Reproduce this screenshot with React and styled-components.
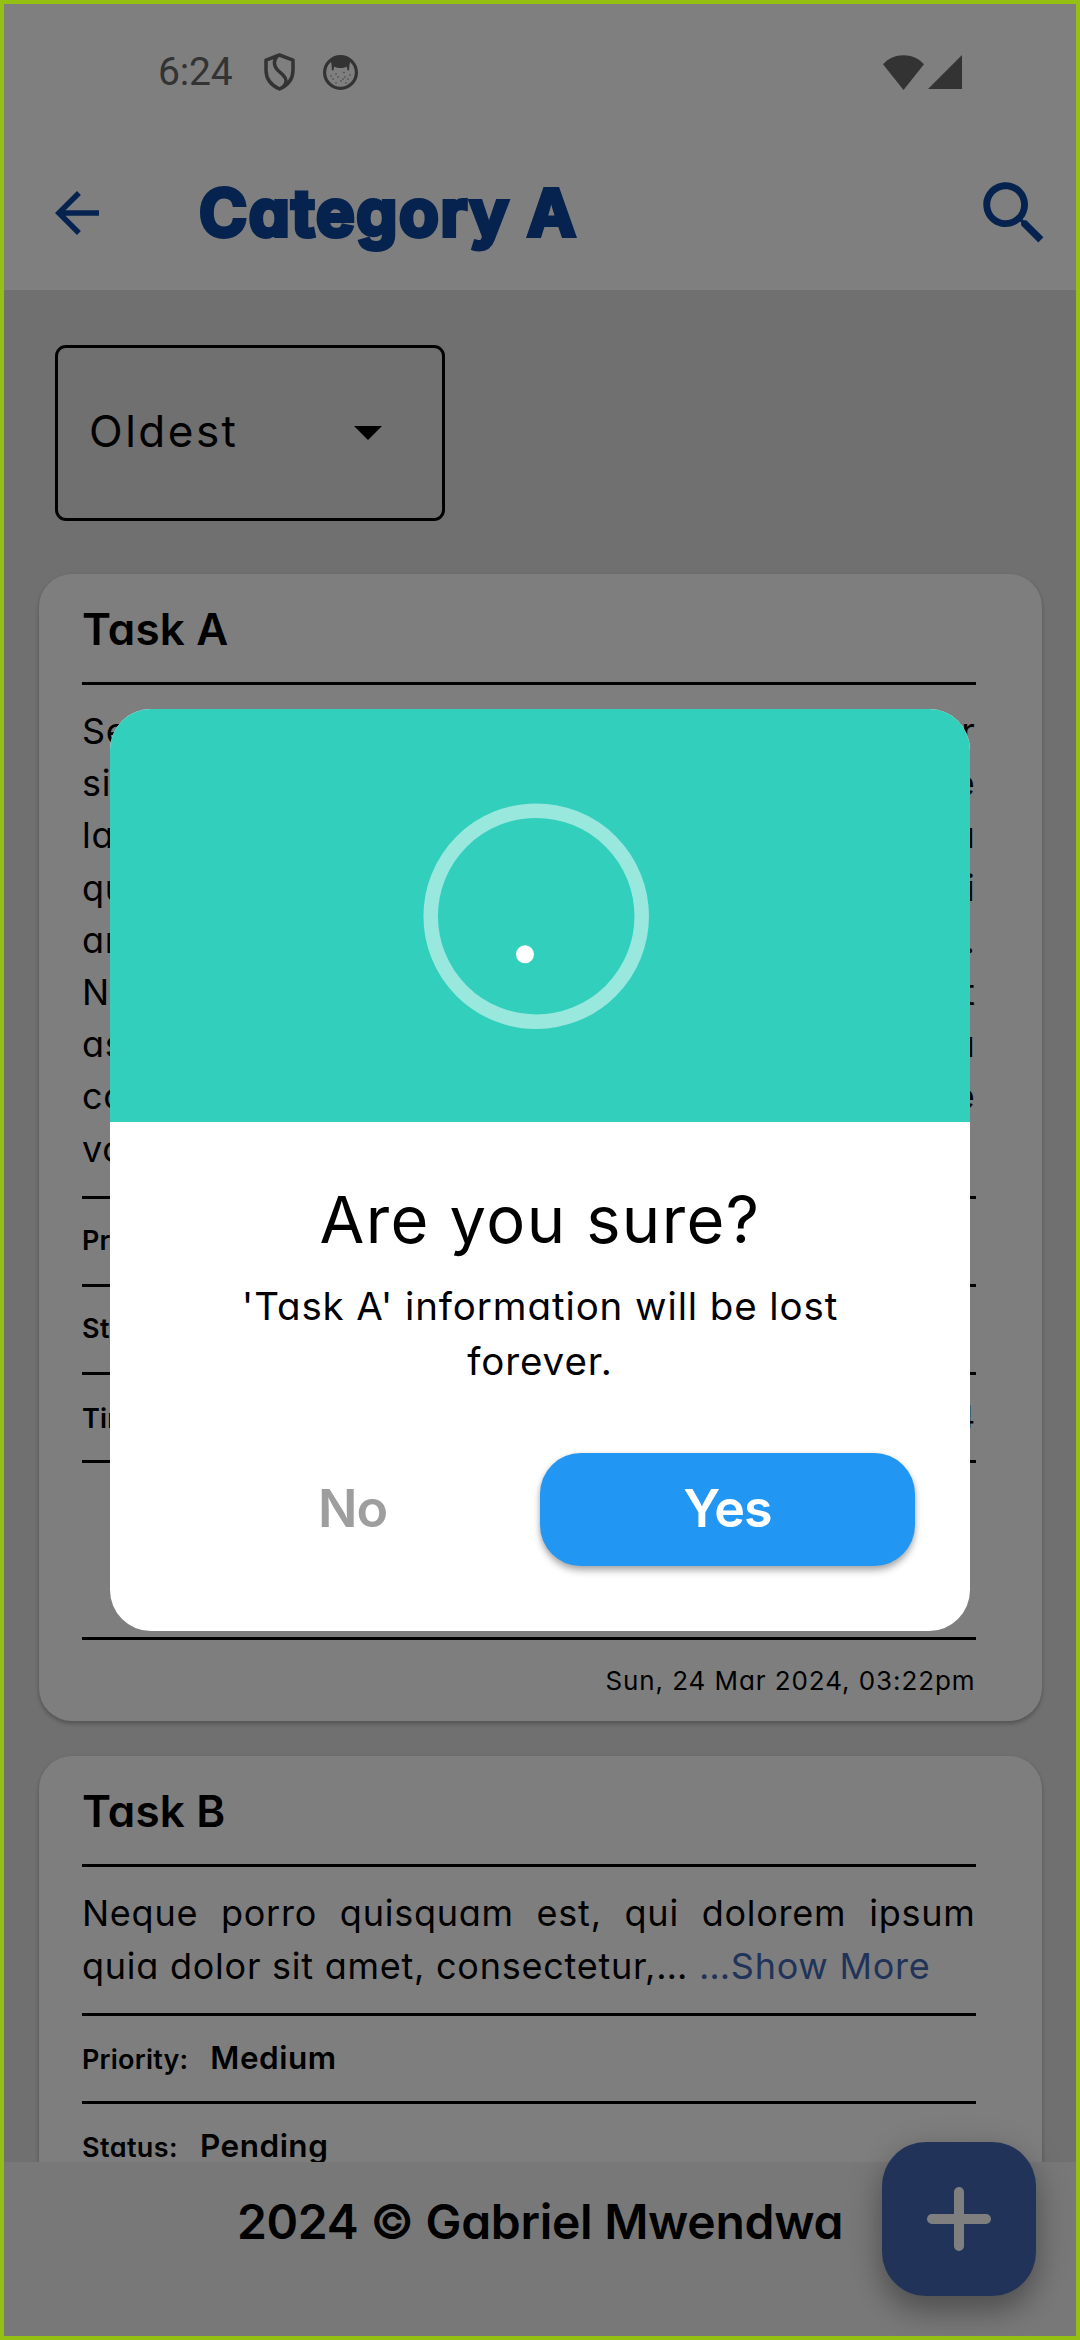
import React from "react";
import styled, { createGlobalStyle } from "styled-components";

const GlobalStyle = createGlobalStyle`
  *, *::before, *::after { box-sizing: border-box; }
  body {
    margin: 0;
    font-family: Inter, "Noto Sans", sans-serif;
    font-feature-settings: "cv11" 1;
    color: #000;
  }
  button { font: inherit; font-feature-settings: inherit; border: 0; padding: 0; background: none; }
  h1, h2, p { margin: 0; font-weight: 400; }
  svg { display: block; }
`;

const Screen = styled.div`
  position: relative;
  display: flex;
  flex-direction: column;
  width: 1080px;
  height: 2340px;
  overflow: hidden;
  background: #e0e0e0;
`;

const StatusBar = styled.div`
  display: flex;
  align-items: center;
  height: 136px;
  padding: 8px 118px 0 158px;
  background: #fff;
  color: #666;
`;

const Clock = styled.span`
  width: 106px;
  font: 400 39px/46px Roboto, sans-serif;
  letter-spacing: -0.2px;
`;

const StatusIcons = styled.div`
  display: flex;
  align-items: center;
  gap: ${(p) => p.$gap}px;
  margin-left: ${(p) => (p.$end ? "auto" : "0")};
`;

const AppBar = styled.header`
  display: flex;
  align-items: center;
  height: 154px;
  padding: 0 25px 0 44px;
  background: #fff;
  color: #0d47a1;
`;

const PageTitle = styled.h1`
  flex: 1;
  margin-left: 89px;
  font-size: 65px;
  line-height: 80px;
  font-weight: 700;
  letter-spacing: ${(p) => p.$spacing}px;
  -webkit-text-stroke: 4px #0d47a1;
  stroke-linejoin: round;
`;

const Content = styled.main`
  height: 1872px;
  padding: 55px 38.5px 0;
  overflow: hidden;
`;

const Select = styled.div`
  display: flex;
  align-items: center;
  justify-content: space-between;
  width: 390px;
  height: 176px;
  margin-left: 16.5px;
  padding: 0 60px 0 31px;
  border: 3px solid #000;
  border-radius: 11px;
  font-size: 44px;
  line-height: 60px;
  letter-spacing: 2.5px;
`;

const SelectLabel = styled.span`
  padding-bottom: 4px;
`;

const Card = styled.section`
  margin-top: ${(p) => p.$gap}px;
  padding: 0 66px 0 43.5px;
  border-radius: 33px;
  background: #fdfdfd;
  box-shadow: 0 3px 4px rgba(0, 0, 0, 0.2), 0 1px 4px rgba(0, 0, 0, 0.08);
`;

const CardTitle = styled.h2`
  height: 108px;
  padding-top: 25px;
  font-size: 44px;
  line-height: 61px;
  font-weight: 600;
  letter-spacing: 0.2px;
`;

const Divider = styled.div`
  height: 3px;
  background: #000;
`;

const Paragraph = styled.div`
  padding: 20px 0 21px;
  font-size: 36px;
  line-height: 52.2px;
  letter-spacing: ${(p) => p.$spacing}px;
`;

const TextLine = styled.div`
  white-space: nowrap;
  text-align: justify;
  text-align-last: ${(p) => (p.$last ? "left" : "justify")};
`;

const ShowMore = styled.span`
  color: #4267b2;
`;

const Row = styled.div`
  display: flex;
  align-items: baseline;
  height: 85px;
  padding-top: 18.5px;
  line-height: 47px;
`;

const RowLabel = styled.span`
  font-size: 27px;
  font-weight: 600;
  letter-spacing: ${(p) => p.$spacing || 0.2}px;
`;

const RowValue = styled.span`
  margin-left: ${(p) => (p.$end ? "auto" : "22px")};
  font-size: 31.5px;
  font-weight: ${(p) => (p.$end ? 400 : 600)};
  letter-spacing: 0.5px;
`;

const Actions = styled.div`
  height: 174px;
`;

const Timestamp = styled.div`
  height: 81px;
  font-size: 26px;
  line-height: 81px;
  letter-spacing: 0.92px;
  text-align: right;
`;

const Footer = styled.footer`
  height: 178px;
  padding-top: 30px;
  background: #f0f0f0;
  font-size: 48px;
  line-height: 60px;
  font-weight: 600;
  letter-spacing: -0.3px;
  text-align: center;
`;

const Fab = styled.button`
  position: absolute;
  right: 44px;
  bottom: 44px;
  display: grid;
  place-items: center;
  width: 154px;
  height: 154px;
  border-radius: 44px;
  background: #4267b2;
  color: #fff;
  box-shadow: 0 16px 28px rgba(0, 0, 0, 0.27), 0 3px 40px rgba(0, 0, 0, 0.12);
`;

const Scrim = styled.div`
  position: absolute;
  inset: 0;
  display: grid;
  place-items: center;
  background: rgba(0, 0, 0, 0.5);
`;

const Dialog = styled.div`
  width: 860px;
  overflow: hidden;
  border-radius: 41px;
  background: #fff;
`;

const DialogHero = styled.div`
  height: 413px;
  background: #33cfbd;
`;

const DialogBody = styled.div`
  padding: 51px 55px 65px;
  text-align: center;
`;

const DialogTitle = styled.h2`
  font-size: 65px;
  line-height: 94px;
  letter-spacing: ${(p) => p.$spacing}px;
`;

const DialogText = styled.p`
  margin-top: 12px;
  font-size: 38.5px;
  line-height: 55px;
  letter-spacing: ${(p) => p.$spacing}px;
`;

const ButtonRow = styled.div`
  display: grid;
  grid-template-columns: 1fr 1fr;
  margin-top: 64px;
`;

const DialogButton = styled.button`
  height: 112.7px;
  padding-bottom: 2px;
  border-radius: 41px;
  font-size: 52px;
  font-weight: 600;
  letter-spacing: -1px;
  color: ${(p) => (p.$primary ? "#fff" : "#9e9e9e")};
  background: ${(p) => (p.$primary ? "#2196f3" : "transparent")};
  box-shadow: ${(p) => (p.$primary ? "0 5px 7px rgba(0,0,0,.28), 0 1px 5px rgba(0,0,0,.12)" : "none")};
`;

const ScreenBorder = styled.div`
  position: absolute;
  inset: 0;
  border: 4px solid #94c014;
  pointer-events: none;
`;

const ShieldIcon = () => (
  <svg width="31" height="38" viewBox="0 0 31 38" fill="none" stroke="currentColor" strokeWidth="3.5" strokeLinejoin="round">
    <path d="M15.5 2 L29 7.2 V17 C29 26 23.5 32.5 15.5 36 C7.5 32.5 2 26 2 17 V7.2 Z" />
    <path d="M13 3.500 C9.500 7 9.500 13 13.500 17 L19 22 C23 26 23 30 19.500 33.500" />
  </svg>
);

const freckles = [
  [8, 21], [10, 24], [13, 19], [15, 22], [18, 26], [21, 17.5], [22, 22], [20, 24], [25, 24], [27, 20], [13, 28], [23, 28],
];

const FaceIcon = () => (
  <svg width="35" height="35" viewBox="0 0 35 35">
    <circle cx="17.5" cy="17.5" r="15.9" fill="none" stroke="currentColor" strokeWidth="3.2" />
    <path
      d="M7.5 5 C11 1.5 24 1.5 27.500 5 L26.500 9.500 L26 15.500 L24.500 15.300 L23.800 11.500 C20 13.500 15 13.500 11.200 11.500 L10.500 15.300 L9 15.500 L8.500 9.500 Z"
      fill="currentColor"
    />
    {freckles.map(([x, y]) => (
      <circle key={`${x}-${y}`} cx={x} cy={y} r="0.7" fill="currentColor" />
    ))}
  </svg>
);

const WifiIcon = () => (
  <svg width="41" height="35" viewBox="0 0 41 35" fill="currentColor">
    <path d="M20.5 35 L0 9.2 C5.5 3.5 12.5 0.3 20.5 0.3 S35.500 3.500 41 9.200 Z" />
  </svg>
);

const SignalIcon = () => (
  <svg width="34" height="34" viewBox="0 0 34 34" fill="currentColor">
    <path d="M34 0 V34 H0 Z" />
  </svg>
);

const BackIcon = () => (
  <svg width="66" height="66" viewBox="0 0 24 24" fill="currentColor">
    <path d="M20 11H7.830l5.590-5.590L12 4l-8 8 8 8 1.410-1.410L7.830 13H20v-2z" />
  </svg>
);

const SearchIcon = () => (
  <svg width="82.5" height="82.5" viewBox="0 0 24 24" fill="currentColor">
    <path d="M15.5 14h-.79l-.28-.27C15.410 12.590 16 11.110 16 9.500 16 5.910 13.090 3 9.500 3S3 5.910 3 9.500 5.910 16 9.500 16c1.610 0 3.090-.59 4.230-1.570l.27.28v.79l5 4.990L20.490 19l-4.990-5zm-6 0C7.010 14 5 11.990 5 9.500S7.010 5 9.500 5 14 7.010 14 9.500 11.990 14 9.500 14z" />
  </svg>
);

const CaretIcon = () => (
  <svg width="28" height="14" viewBox="0 0 28 14">
    <path d="M0 0 H28 L14 14 Z" />
  </svg>
);

const PlusIcon = () => (
  <svg width="64" height="64" viewBox="0 0 64 64" fill="none" stroke="currentColor" strokeWidth="10" strokeLinecap="round">
    <path d="M32 5 V59 M5 32 H59" />
  </svg>
);

const Spinner = () => (
  <svg width="860" height="413" viewBox="0 0 860 413">
    <circle cx="426.2" cy="207.200" r="105.500" fill="none" stroke="#99e8de" strokeWidth="14.500" />
    <circle cx="415" cy="245.300" r="9" fill="#fff" />
  </svg>
);

const taskALines = [
  "Sed ut perspiciatis unde omnis iste natus error",
  "sit voluptatem accusantium doloremque",
  "laudantium, totam rem aperiam, eaque ipsa",
  "quae ab illo inventore veritatis et quasi",
  "architecto beatae vitae dicta sunt explicabo.",
  "Nemo enim ipsam voluptatem quia voluptas sit",
  "aspernatur aut odit aut fugit, sed quia",
  "consequuntur magni dolores eos qui ratione",
];

export default function App() {
  return (
    <>
      <GlobalStyle />
      <Screen>
        <StatusBar>
          <Clock>6:24</Clock>
          <StatusIcons $gap={28}>
            <ShieldIcon />
            <FaceIcon />
          </StatusIcons>
          <StatusIcons $gap={4} $end>
            <WifiIcon />
            <SignalIcon />
          </StatusIcons>
        </StatusBar>
        <AppBar>
          <BackIcon />
          <PageTitle $spacing={1.6}>Category A</PageTitle>
          <SearchIcon />
        </AppBar>
        <Content>
          <Select>
            <SelectLabel>Oldest</SelectLabel>
            <CaretIcon />
          </Select>
          <Card $gap={53}>
            <CardTitle>Task A</CardTitle>
            <Divider />
            <Paragraph $spacing={0.7}>
              {taskALines.map((line) => (
                <TextLine key={line}>{line}</TextLine>
              ))}
              <TextLine $last>voluptatem</TextLine>
            </Paragraph>
            <Divider />
            <Row>
              <RowLabel>Priority:</RowLabel>
            </Row>
            <Divider />
            <Row>
              <RowLabel $spacing={0.4}>Status:</RowLabel>
            </Row>
            <Divider />
            <Row>
              <RowLabel>Time:</RowLabel>
              <RowValue $end>24 Mar 2024</RowValue>
            </Row>
            <Divider />
            <Actions />
            <Divider />
            <Timestamp>Sun, 24 Mar 2024, 03:22pm</Timestamp>
          </Card>
          <Card $gap={35.5}>
            <CardTitle>Task B</CardTitle>
            <Divider />
            <Paragraph $spacing={0.75}>
              <TextLine>Neque porro quisquam est, qui dolorem ipsum</TextLine>
              <TextLine $last>
                quia dolor sit amet, consectetur,… <ShowMore>…Show More</ShowMore>
              </TextLine>
            </Paragraph>
            <Divider />
            <Row>
              <RowLabel>Priority:</RowLabel>
              <RowValue>Medium</RowValue>
            </Row>
            <Divider />
            <Row>
              <RowLabel $spacing={0.4}>Status:</RowLabel>
              <RowValue>Pending</RowValue>
            </Row>
            <Divider />
          </Card>
        </Content>
        <Footer>2024 © Gabriel Mwendwa</Footer>
        <Fab aria-label="Add task">
          <PlusIcon />
        </Fab>
        <Scrim>
          <Dialog role="dialog">
            <DialogHero>
              <Spinner />
            </DialogHero>
            <DialogBody>
              <DialogTitle $spacing={1.4}>Are you sure?</DialogTitle>
              <DialogText $spacing={0.9}>
                'Task A' information will be lost
                <br />
                forever.
              </DialogText>
              <ButtonRow>
                <DialogButton>No</DialogButton>
                <DialogButton $primary>Yes</DialogButton>
              </ButtonRow>
            </DialogBody>
          </Dialog>
        </Scrim>
        <ScreenBorder />
      </Screen>
    </>
  );
}
